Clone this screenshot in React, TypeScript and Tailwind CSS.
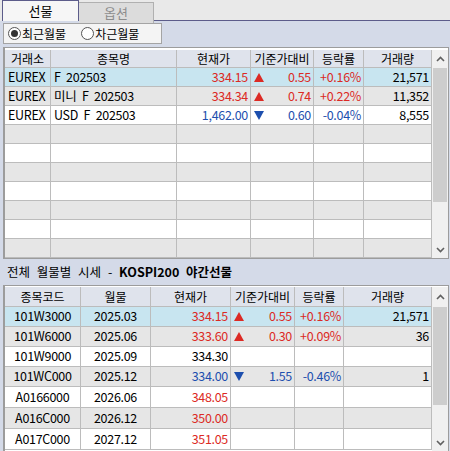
import React from "react";

type Cell = { t?: string; c?: string; tri?: "up" | "down" };
type Row = Cell[];

const RED = "text-[#dc2a24]";
const BLUE = "text-[#1d4fae]";

const Tri = ({ dir }: { dir: "up" | "down" }) => (
  <svg width="10" height="9" viewBox="0 0 10 9" className="shrink-0">
    {dir === "up" ? (
      <polygon points="5,0 10,9 0,9" fill="#dc2a24" />
    ) : (
      <polygon points="0,0 10,0 5,9" fill="#1d4fae" />
    )}
  </svg>
);

const ChevUp = () => (
  <svg width="9" height="6" viewBox="0 0 9 6">
    <polyline points="1,5 4.5,1.5 8,5" fill="none" stroke="#606060" strokeWidth="1.6" />
  </svg>
);
const ChevDown = () => (
  <svg width="9" height="6" viewBox="0 0 9 6">
    <polyline points="1,1 4.5,4.5 8,1" fill="none" stroke="#606060" strokeWidth="1.6" />
  </svg>
);

const FONT = "font-['Noto_Sans_CJK_KR',sans-serif]";

function Radio({ checked, label }: { checked: boolean; label: string }) {
  return (
    <div className="flex items-center gap-[1px]">
      <div className="w-[13px] h-[13px] rounded-full border border-[#555] bg-white flex items-center justify-center">
        {checked && <div className="w-[7px] h-[7px] rounded-full bg-[#333]" />}
      </div>
      <span className="text-[12px] leading-none text-black">{label}</span>
    </div>
  );
}

function Scrollbar({
  headH,
  thumbH,
  trackH,
}: {
  headH: string;
  thumbH: string;
  trackH: string;
}) {
  return (
    <div className="w-[16px] flex flex-col bg-[#f0f0f0]">
      <div className={`${headH} flex items-center justify-center`}>
        <ChevUp />
      </div>
      <div className={`${thumbH} bg-[#cdcdcd] mx-[1px]`} />
      <div className={`${trackH}`} />
      <div className="flex-1 flex items-end justify-center pb-[5px]">
        <ChevDown />
      </div>
    </div>
  );
}

const grid1Cols = "grid grid-cols-[46px_126px_74px_63px_50px_68px]";
const grid2Cols = "grid grid-cols-[76px_70px_80px_64px_49px_88px]";

const grid1Head = ["거래소", "종목명", "현재가", "기준가대비", "등락률", "거래량"];
const grid2Head = ["종목코드", "월물", "현재가", "기준가대비", "등락률", "거래량"];

const g1: Row[] = [
  [
    { t: "EUREX" },
    { t: "F 202503" },
    { t: "334.15", c: RED },
    { t: "0.55", c: RED, tri: "up" },
    { t: "+0.16%", c: RED },
    { t: "21,571" },
  ],
  [
    { t: "EUREX" },
    { t: "미니 F 202503" },
    { t: "334.34", c: RED },
    { t: "0.74", c: RED, tri: "up" },
    { t: "+0.22%", c: RED },
    { t: "11,352" },
  ],
  [
    { t: "EUREX" },
    { t: "USD F 202503" },
    { t: "1,462.00", c: BLUE },
    { t: "0.60", c: BLUE, tri: "down" },
    { t: "-0.04%", c: BLUE },
    { t: "8,555" },
  ],
];
while (g1.length < 10) g1.push([{}, {}, {}, {}, {}, {}]);

const g2: Row[] = [
  [{ t: "101W3000" }, { t: "2025.03" }, { t: "334.15", c: RED }, { t: "0.55", c: RED, tri: "up" }, { t: "+0.16%", c: RED }, { t: "21,571" }],
  [{ t: "101W6000" }, { t: "2025.06" }, { t: "333.60", c: RED }, { t: "0.30", c: RED, tri: "up" }, { t: "+0.09%", c: RED }, { t: "36" }],
  [{ t: "101W9000" }, { t: "2025.09" }, { t: "334.30" }, {}, {}, {}],
  [{ t: "101WC000" }, { t: "2025.12" }, { t: "334.00", c: BLUE }, { t: "1.55", c: BLUE, tri: "down" }, { t: "-0.46%", c: BLUE }, { t: "1" }],
  [{ t: "A0166000" }, { t: "2026.06" }, { t: "348.05", c: RED }, {}, {}, {}],
  [{ t: "A016C000" }, { t: "2026.12" }, { t: "350.00", c: RED }, {}, {}, {}],
  [{ t: "A017C000" }, { t: "2027.12" }, { t: "351.05", c: RED }, {}, {}, {}],
];
const g2H = ["h-[20px]", "h-[20px]", "h-[20px]", "h-[20px]", "h-[21px]", "h-[21px]", "h-[21px]"];

function rowBg(i: number) {
  if (i === 0) return "bg-[#c8e5f0]";
  return i % 2 === 1 ? "bg-[#e6e6e6]" : "bg-white";
}

function DataCell({ cell, align }: { cell: Cell; align: "left" | "center" | "right" }) {
  const al =
    align === "left" ? "justify-start pl-[3px]" : align === "center" ? "justify-center" : "justify-end pr-[2px]";
  return (
    <div
      className={`border-r border-b border-[#bcbcbc] flex items-center ${al} ${cell.c ?? "text-black"} text-[12.5px] tracking-[-0.3px] [word-spacing:3px] leading-none whitespace-nowrap overflow-hidden`}
    >
      {cell.tri ? (
        <div className="flex items-center justify-between w-full pl-[3px]">
          <Tri dir={cell.tri} />
          <span>{cell.t}</span>
        </div>
      ) : (
        cell.t
      )}
    </div>
  );
}

export default function App() {
  const g1Align: ("left" | "center" | "right")[] = ["left", "left", "right", "right", "right", "right"];
  const g2Align: ("left" | "center" | "right")[] = ["center", "center", "right", "right", "right", "right"];
  return (
    <div className={`w-[450px] h-[451px] overflow-hidden bg-[#d4dae8] flex flex-col ${FONT}`}>
      {/* Tabs */}
      <div className="h-[21px] flex bg-[#e9e9e9] pl-[2px] shrink-0">
        <div className="w-[77px] h-[21px] border-l border-t border-r border-[#5c5c8a] bg-[#f6f6f6] flex items-center justify-center text-[13px] text-black">
          선물
        </div>
        <div className="w-[75px] h-[21px] pt-[2px] flex flex-col border-b border-[#5c5c8a]">
          <div className="flex-1 bg-[#dcdcdc] border-t border-r border-[#b0b0b0] flex items-center justify-center text-[13px] text-[#8c8c8c]">
            옵션
          </div>
        </div>
        <div className="flex-1 border-b border-[#5c5c8a]" />
      </div>

      {/* Radio panel */}
      <div className="h-[26px] shrink-0 pl-[3px] pt-[2px]">
        <div className="w-[159px] h-[21px] border border-[#a4a4a4] bg-[#f4f4f4] flex items-center pl-[4px] gap-[15px]">
          <Radio checked label="최근월물" />
          <Radio checked={false} label="차근월물" />
        </div>
      </div>

      {/* Grid 1 */}
      <div className="ml-[3px] w-[446px] h-[212px] shrink-0 border border-[#9c9c9c] border-l-2 bg-white pt-[2px] flex">
        <div className="flex flex-col">
          <div className={`${grid1Cols} h-[18px] bg-[#dfe3ec]`}>
            {grid1Head.map((h) => (
              <div
                key={h}
                className="border-r border-b border-[#bcbcbc] flex items-center justify-center text-[12px] leading-none text-black"
              >
                {h}
              </div>
            ))}
          </div>
          {g1.map((r, i) => (
            <div key={i} className={`${grid1Cols} h-[19px] ${rowBg(i)}`}>
              {r.map((c, j) => (
                <DataCell key={j} cell={c} align={g1Align[j]} />
              ))}
            </div>
          ))}
        </div>
        <Scrollbar headH="h-[18px]" thumbH="h-[134px]" trackH="h-[34px]" />
      </div>

      {/* Section header */}
      <div className="h-[26px] shrink-0 flex items-center pl-[7px] text-[12.5px] text-black whitespace-pre [word-spacing:4px]">
        <span>전체 월물별 시세 - </span>
        <span className="font-bold">KOSPI200 야간선물</span>
      </div>

      {/* Grid 2 */}
      <div className="ml-[3px] w-[446px] flex-1 border border-b-0 border-[#9c9c9c] border-l-2 bg-white pt-[1px] flex">
        <div className="flex flex-col">
          <div className={`${grid2Cols} h-[20px] bg-[#dfe3ec]`}>
            {grid2Head.map((h) => (
              <div
                key={h}
                className="border-r border-b border-[#bcbcbc] flex items-center justify-center text-[12px] leading-none text-black"
              >
                {h}
              </div>
            ))}
          </div>
          {g2.map((r, i) => (
            <div key={i} className={`${grid2Cols} ${g2H[i]} ${rowBg(i)}`}>
              {r.map((c, j) => (
                <DataCell key={j} cell={c} align={g2Align[j]} />
              ))}
            </div>
          ))}
        </div>
        <Scrollbar headH="h-[20px]" thumbH="h-[98px]" trackH="h-[32px]" />
      </div>
    </div>
  );
}
